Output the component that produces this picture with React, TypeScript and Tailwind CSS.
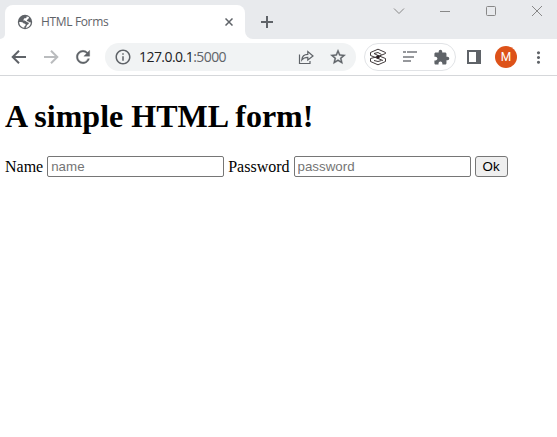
import type { ReactNode } from "react";
import { MdInfoOutline, MdStarBorder, MdExtension, MdMoreVert, MdRefresh } from "react-icons/md";

function Slot({ w, children }: { w: string; children: ReactNode }) {
  return <span className={`flex h-full shrink-0 items-center justify-center ${w}`}>{children}</span>;
}

function Globe() {
  return (
    <svg width="16" height="16" viewBox="0 0 16 16">
      <circle cx="8" cy="8" r="7.2" fill="#5f6368" />
      <path d="M9.600 2.400c.2 1.500-.8 1.800-2 1.900-1 .1-.6 1.300-1.300 1.900.9.900 2.400.2 3 1.300.5 1 2 .9 2.400 1.200.5.400-.2 1.500-.9 1.900-1.200.6-1 1.800-2.200 3.200 3 .1 5.300-2.600 5.200-5.500-.7.3-1.400.2-1.900-.5-.7-.8-2.100-.3-2.100-1.400.1-1.200 1.600-.9 1.800-2 .1-.8.600-1 .4-1.300-.7-.4-1.400-.7-2.400-.7zM2.200 8c0 3 2.200 5.500 5.100 5.800.2-.8-.1-1.500.5-1.900.8-.5 1.300-1 .7-1.700-.7-.8-1.700-.2-2.200-1.100C5.800 8.200 4.800 8 2.200 8z" fill="#fff" />
    </svg>
  );
}

function Arrow({ className }: { className: string }) {
  return (
    <svg className={className} width="16" height="16" fill="none" stroke="currentColor" strokeWidth="2">
      <path d="M15 8H2.500M8 1.700L1.700 8 8 14.300" />
    </svg>
  );
}

function TabStrip() {
  return (
    <div className="flex h-[39px] bg-[#e8eaed]">
      <div className="flex w-[5px] items-end bg-white">
        <div className="h-full w-full rounded-br-[5px] bg-[#e8eaed]" />
      </div>
      <div className="mt-[5px] flex w-60 items-center rounded-t-lg bg-white pl-3 pr-3">
        <Globe />
        <span className="ml-2 font-['Open_Sans',sans-serif] text-[12px] leading-4 tracking-[-0.35px] text-[#5f6368]">HTML Forms</span>
        <svg className="ml-auto" width="8" height="8" stroke="#5f6368" strokeWidth="1.500"><path d="M.5.5l7 7M7.500.5l-7 7" /></svg>
      </div>
      <div className="w-2 bg-white">
        <div className="h-full rounded-bl-lg bg-[#e8eaed]" />
      </div>
      <div className="flex w-7 items-center justify-center pt-[5px]">
        <svg width="12" height="12" fill="#5f6368"><path d="M5 0h2v5h5v2H7v5H5V7H0V5h5z" /></svg>
      </div>
      <div className="ml-auto flex h-[22px] w-[181px] text-[#888]">
        <Slot w="w-[46px]"><svg width="12" height="12" fill="none" stroke="currentColor"><path d="M1 3.500l5 5 5-5" /></svg></Slot>
        <Slot w="w-[46px]"><svg width="12" height="12" fill="none" stroke="currentColor"><path d="M1 6.500h10" /></svg></Slot>
        <Slot w="w-[46px]"><svg width="12" height="12" fill="none" stroke="currentColor"><rect x="1.500" y="1.500" width="9" height="9" rx="1" /></svg></Slot>
        <Slot w="w-[46px]"><svg width="12" height="12" fill="none" stroke="currentColor"><path d="M1 1l10 10M11 1L1 11" /></svg></Slot>
      </div>
    </div>
  );
}

function Toolbar() {
  return (
    <div className="flex h-[37px] items-center border-b border-[#d5d7da] bg-white text-[#5f6368]">
      <div className="flex w-[105px] items-center pl-[3px]">
        <Slot w="w-8"><Arrow className="text-[#5f6368]" /></Slot>
        <Slot w="w-8"><Arrow className="rotate-180 text-[#babcbe]" /></Slot>
        <Slot w="w-8"><MdRefresh className="[&>path:last-child]:stroke-[#5f6368] [&>path:last-child]:[stroke-width:0.4]" size={20} /></Slot>
      </div>
      <div className="flex h-7 w-[251px] items-center rounded-full bg-[#f1f3f4] pl-[9px] pr-[9px]">
        <MdInfoOutline size={18} />
        <span className="ml-[7px] font-['Open_Sans',sans-serif] text-[14px] leading-5 tracking-[-0.55px] text-[#202124]">
          127.0.0.1<span className="text-[#5f6368]">:5000</span>
        </span>
        <svg className="ml-auto" width="16" height="16" fill="none" stroke="currentColor" strokeWidth="1.200">
          <path d="M1.500 5.500v9h10.500v-2.500M3.800 11c.3-4 3-5.700 6-5.700V2.500L15 7 9.800 11V8.300c-2.500 0-4.300.5-6 2.700z" />
        </svg>
        <MdStarBorder className="ml-[15px] [&>path:last-child]:stroke-[#5f6368] [&>path:last-child]:[stroke-width:0.5]" size={18} />
      </div>
      <div className="ml-2 flex h-7 w-[92px] items-center rounded-full border border-[#e1e3e6]">
        <Slot w="w-[26px]">
          <svg width="18" height="18" fill="none" stroke="#40393a" strokeWidth="1">
            <path d="M1.500 7.500v-3L9 1.200l7.500 3.300M1.500 7.500L9 10.500l5 2M5 5.500L9 4.500l3.500 2M16.500 10.500v3L9 16.800l-7.500-3.300M16.500 10.500L9 7.500 5 5.500M1.500 13.500v-3L9 8.500l7.500-3v-1M5 12.500l4 1 3.500-1" />
            <circle cx="9" cy="9" r="1.800" fill="#281c20" stroke="none" />
          </svg>
        </Slot>
        <Slot w="w-[37px]">
          <svg width="14" height="12" fill="#96989c"><path d="M0 0h3v2H0zM4 0h10v2H4zM0 5h11v2H0zM0 9h8v2H0z" /></svg>
        </Slot>
        <Slot w="w-[26px]"><MdExtension size={17} /></Slot>
      </div>
      <Slot w="w-[36px]"><svg width="14" height="14" fill="currentColor"><path fillRule="evenodd" d="M0 0h14v14H0zM2 2v10h7V2z" /></svg></Slot>
      <span className="ml-[3px] flex h-[22px] w-[22px] items-center justify-center rounded-full bg-[#dd5219] font-[Roboto,sans-serif] text-[12px] text-white">M</span>
      <Slot w="ml-[11px] w-5"><MdMoreVert size={19} /></Slot>
    </div>
  );
}

export default function App() {
  return (
    <div className="h-[437px] w-[557px] overflow-hidden bg-white">
      <TabStrip />
      <Toolbar />
      <main className="px-[5px] pt-[22px] font-['Liberation_Serif',serif] text-base text-black">
        <h1 className="text-[32px] leading-[37px] font-bold">A simple HTML form!</h1>
        <form className="mt-[21px] flex h-[21px] items-center whitespace-nowrap" onSubmit={(e) => e.preventDefault()}>
          <label>Name</label>
          <input className="ml-1 h-[21px] w-[177px] rounded-[2px] border border-[#767676] px-[3px] font-['Liberation_Sans',sans-serif] text-[13.333px] placeholder:text-[#757575]" placeholder="name" />
          <label className="ml-1">Password</label>
          <input type="password" className="ml-1 h-[21px] w-[177px] rounded-[2px] border border-[#767676] px-[3px] font-['Liberation_Sans',sans-serif] text-[13.333px] placeholder:text-[#757575]" placeholder="password" />
          <button className="ml-1 h-[21px] w-[33px] rounded-[3px] border border-[#767676] bg-[#efefef] font-['Liberation_Sans',sans-serif] text-[13.333px] leading-none">Ok</button>
        </form>
      </main>
    </div>
  );
}
